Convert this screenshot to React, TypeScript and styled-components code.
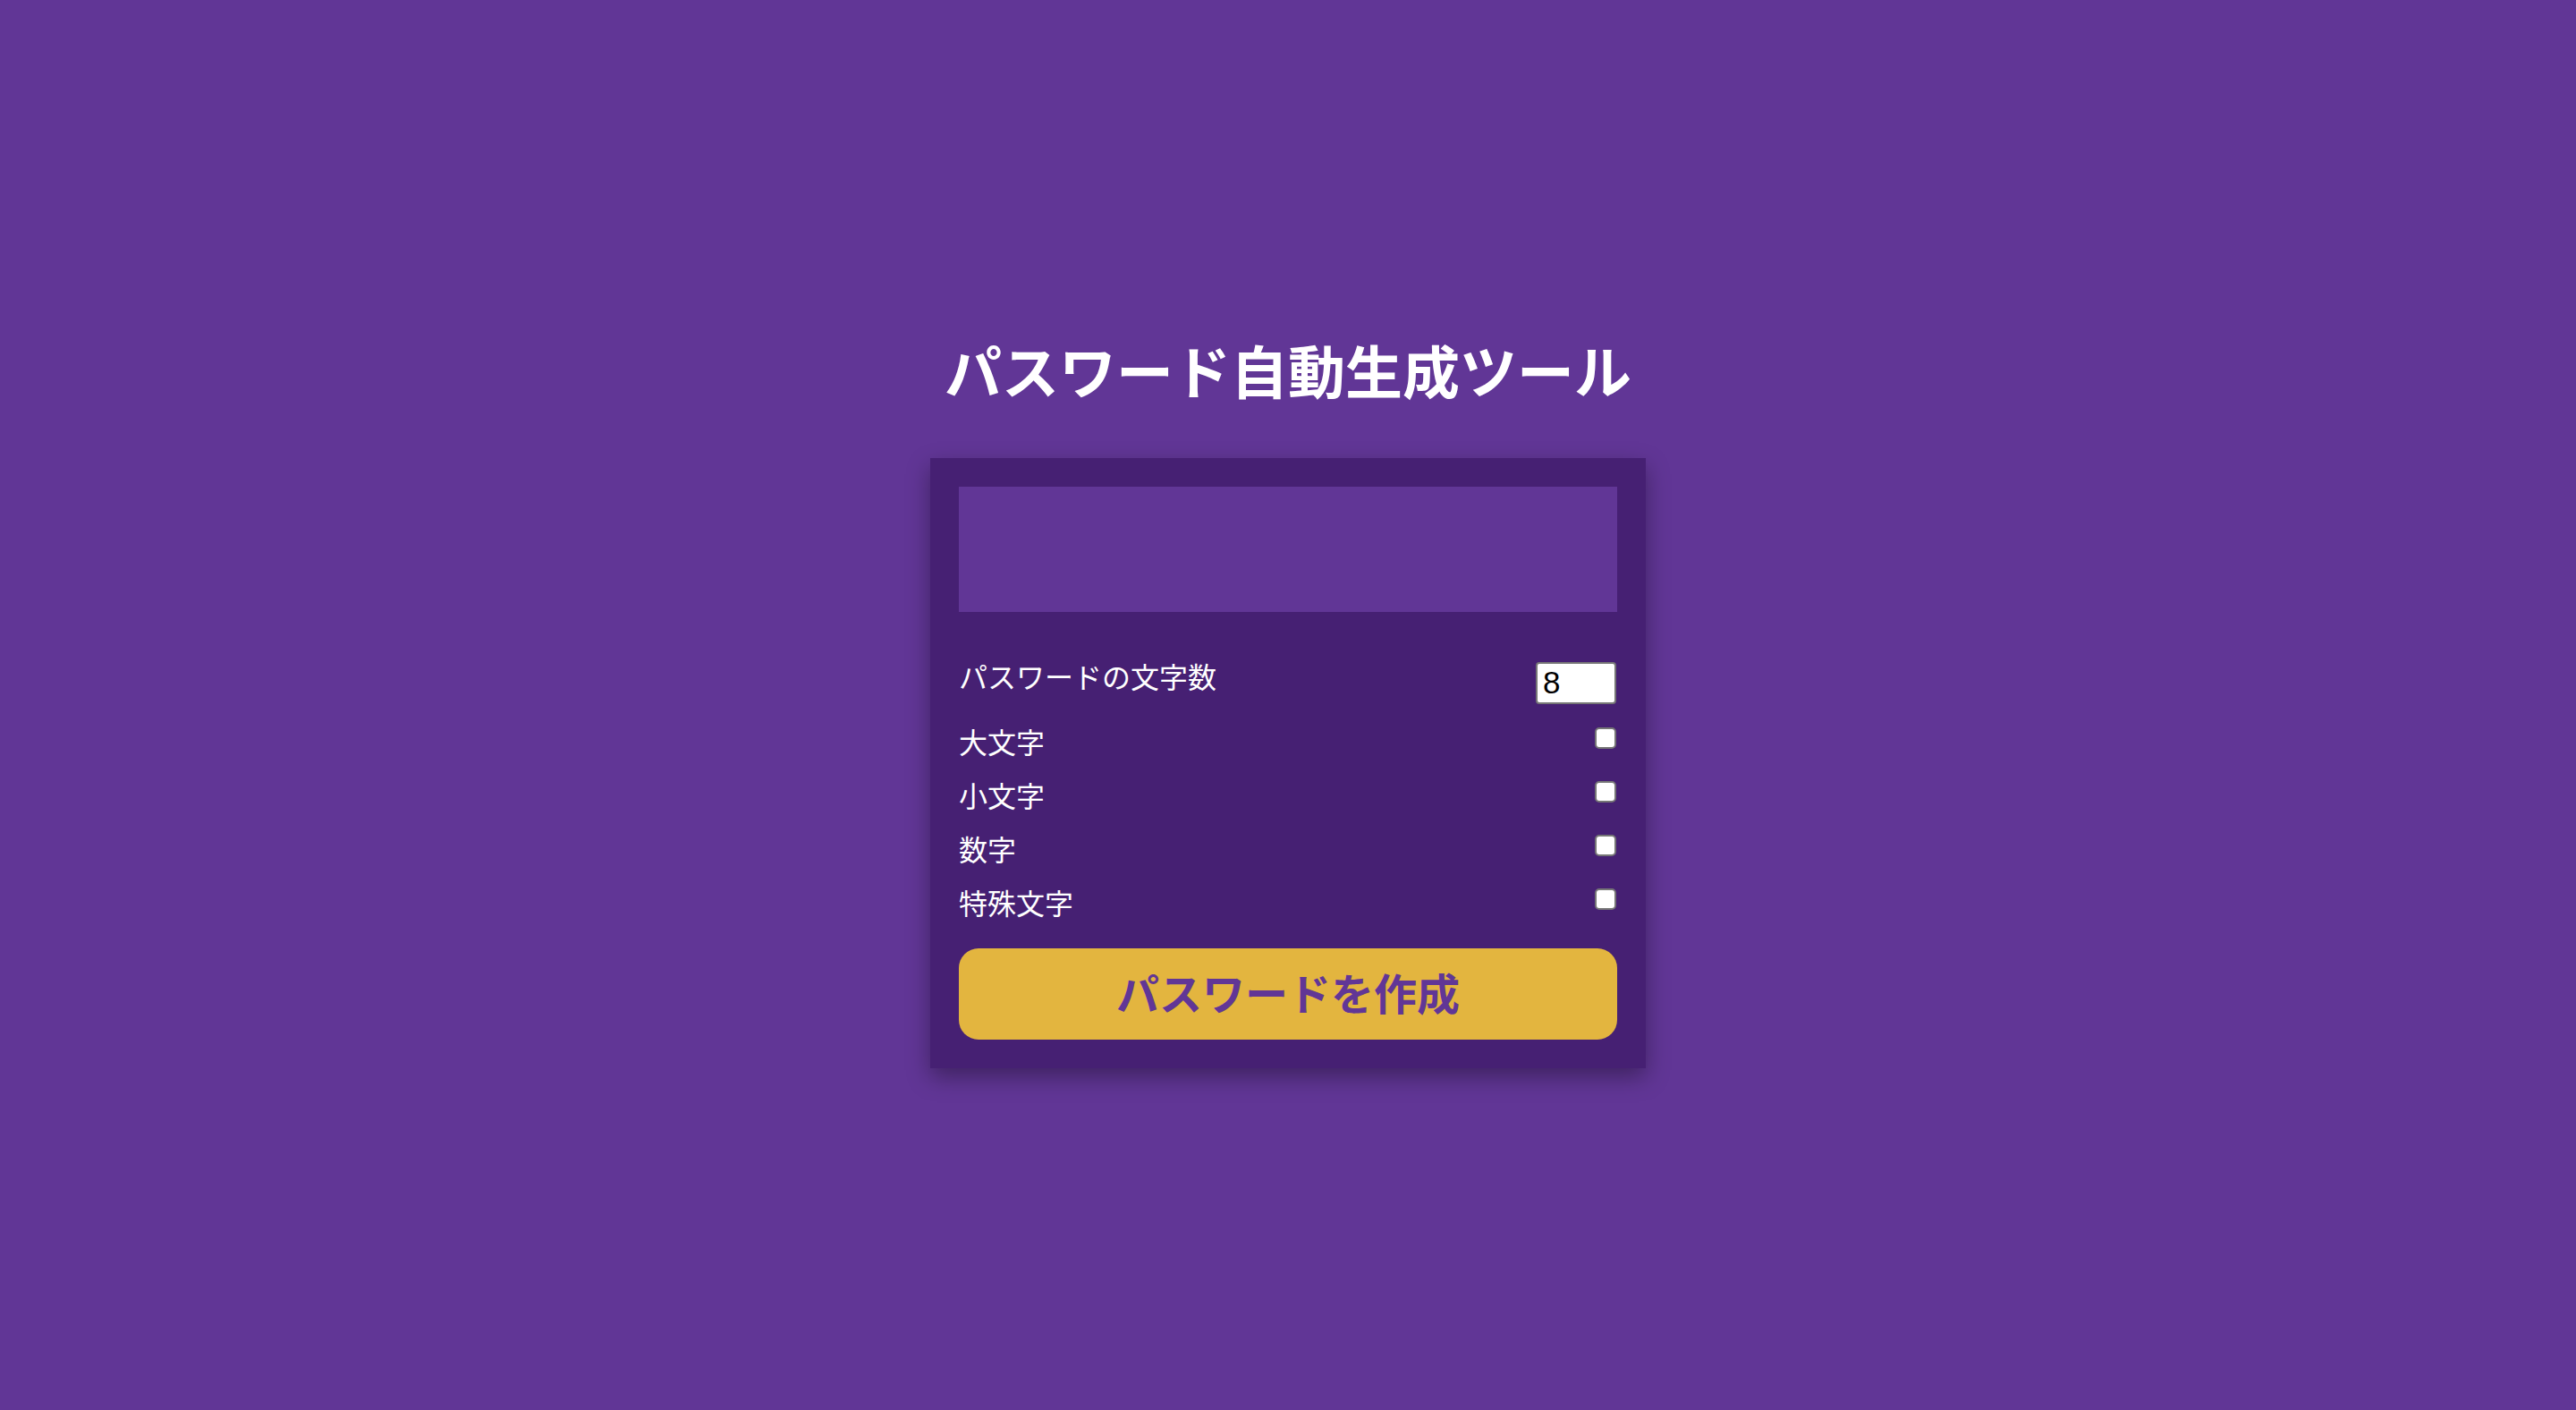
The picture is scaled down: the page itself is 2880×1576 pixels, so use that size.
import React, { useState } from "react";
import styled, { createGlobalStyle } from "styled-components";

const GlobalStyle = createGlobalStyle`
  html, body {
    margin: 0;
    padding: 0;
    background: #613696;
  }
  body {
    font-family: "Noto Sans CJK JP", "Noto Sans", sans-serif;
  }
`;

const Page = styled.main`
  min-height: 100vh;
  box-sizing: border-box;
  padding-bottom: 8px;
  display: flex;
  flex-direction: column;
  align-items: center;
  justify-content: center;
  background: #613696;
`;

const Title = styled.h1`
  margin: 0 0 61px;
  font-size: 64px;
  line-height: 1.2;
  font-weight: 700;
  color: #ffffff;
  font-family: "Noto Sans CJK JP", sans-serif;
`;

const Card = styled.section`
  width: 800px;
  box-sizing: border-box;
  padding: 32px;
  background: #462073;
  box-shadow: 0 10px 24px rgba(0, 0, 0, 0.35);
  display: flex;
  flex-direction: column;
`;

const Output = styled.div`
  height: 140px;
  background: #613696;
  color: #ffffff;
  font-size: 40px;
  display: flex;
  align-items: center;
  justify-content: center;
`;

const Settings = styled.div`
  margin-top: 48px;
  display: flex;
  flex-direction: column;
  gap: 14px;
`;

const Row = styled.div<{ $extra?: number; $inputOffset?: number }>`
  display: flex;
  justify-content: space-between;
  align-items: flex-start;
  margin-bottom: ${(p) => p.$extra ?? 0}px;
`;

const Label = styled.label`
  font-size: 32px;
  line-height: 46px;
  color: #ffffff;
  font-family: "Noto Sans CJK JP", sans-serif;
`;

const NumberInput = styled.input`
  margin: 8px 1px 0 0;
  width: 90px;
  height: 47px;
  box-sizing: border-box;
  border: 2px solid #767676;
  border-radius: 4px;
  padding: 0 6px;
  font-family: "Liberation Sans", Arial, sans-serif;
  font-size: 35px;
  color: #000000;
  background: #ffffff;
  outline: none;
  -moz-appearance: textfield;
  &::-webkit-outer-spin-button,
  &::-webkit-inner-spin-button {
    -webkit-appearance: none;
    margin: 0;
  }
`;

const Check = styled.input`
  appearance: none;
  -webkit-appearance: none;
  margin: 8px 1px 0 0;
  width: 24px;
  height: 24px;
  box-sizing: border-box;
  border: 2px solid #767676;
  border-radius: 5px;
  background: #ffffff;
  &:checked {
    background: #0075ff;
    border-color: #0075ff;
  }
`;

const Generate = styled.button`
  margin-top: 29px;
  height: 102px;
  padding: 0 0 6px;
  border: none;
  border-radius: 22px;
  background: #e3b53f;
  color: #613696;
  font-family: "Noto Sans CJK JP", sans-serif;
  font-size: 48px;
  font-weight: 700;
  cursor: pointer;
  display: flex;
  align-items: center;
  justify-content: center;
`;

const options = [
  { id: "upper", label: "大文字" },
  { id: "lower", label: "小文字" },
  { id: "number", label: "数字" },
  { id: "symbol", label: "特殊文字" },
];

export default function App() {
  const [length, setLength] = useState("8");
  const [checked, setChecked] = useState<Record<string, boolean>>({});
  const [password, setPassword] = useState("");

  const generate = () => {
    const sets: Record<string, string> = {
      upper: "ABCDEFGHIJKLMNOPQRSTUVWXYZ",
      lower: "abcdefghijklmnopqrstuvwxyz",
      number: "0123456789",
      symbol: "!@#$%^&*()_+-=",
    };
    const pool = Object.keys(sets)
      .filter((k) => checked[k])
      .map((k) => sets[k])
      .join("");
    if (!pool) return;
    let out = "";
    for (let i = 0; i < Number(length); i++) {
      out += pool[Math.floor(Math.random() * pool.length)];
    }
    setPassword(out);
  };

  return (
    <>
      <GlobalStyle />
      <Page>
        <Title>パスワード自動生成ツール</Title>
        <Card>
          <Output>{password}</Output>
          <Settings>
            <Row $extra={4}>
              <Label htmlFor="length">パスワードの文字数</Label>
              <NumberInput
                id="length"
                type="number"
                value={length}
                onChange={(e) => setLength(e.target.value)}
              />
            </Row>
            {options.map((o) => (
              <Row key={o.id}>
                <Label htmlFor={o.id}>{o.label}</Label>
                <Check
                  id={o.id}
                  type="checkbox"
                  checked={!!checked[o.id]}
                  onChange={(e) =>
                    setChecked((c) => ({ ...c, [o.id]: e.target.checked }))
                  }
                />
              </Row>
            ))}
          </Settings>
          <Generate onClick={generate}>パスワードを作成</Generate>
        </Card>
      </Page>
    </>
  );
}
